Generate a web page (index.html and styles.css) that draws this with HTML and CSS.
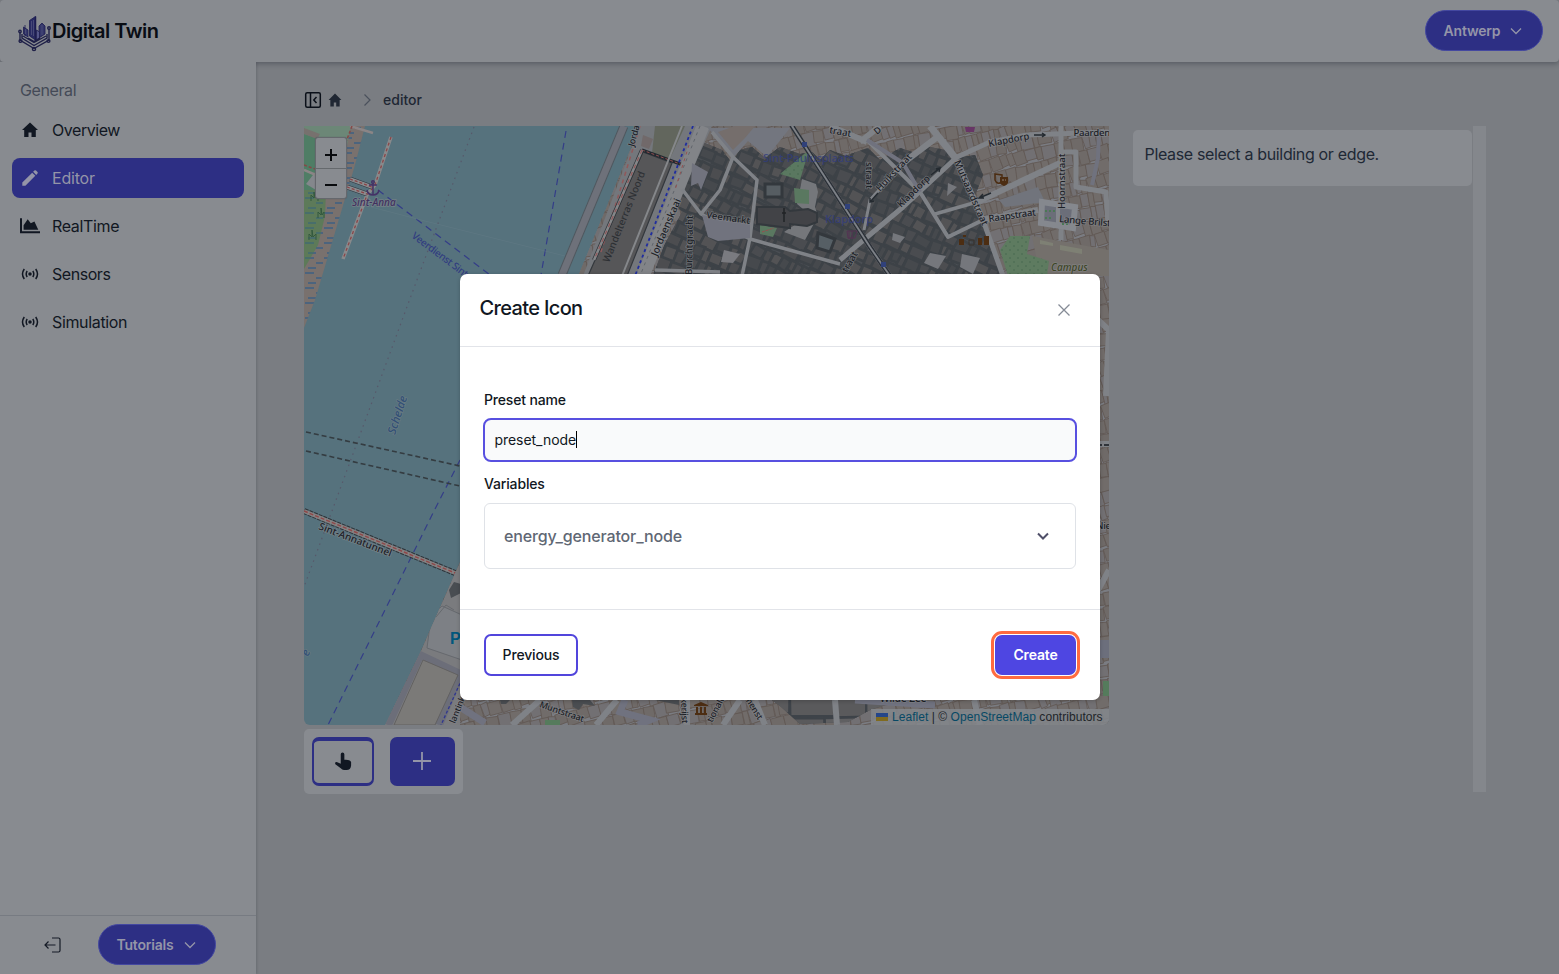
FILE: index.html
```html
<!DOCTYPE html>
<html lang="en">
<head>
<meta charset="utf-8">
<title>Digital Twin</title>
<link rel="stylesheet" href="styles.css">
</head>
<body>
<div class="app">
  <header class="navbar">
    <div class="brand">
      <svg class="logo" viewBox="0 0 34 38">
        <g fill="#1d1d50" stroke="#1d1d50" stroke-width=".8">
          <path d="M11.500 6.500 17.500 2.500V26L11.500 22Z" fill="#282a63"/>
          <path d="M17.500 2.500V27" stroke-width="1.500"/>
          <path d="M5.500 13 10 16V23L5.500 20ZM7 11V22" fill="#34366a"/>
          <path d="M21 12 24 9 27 12V20L21 24Z" fill="#34366a"/>
          <path d="M18.500 16 21.500 18V24L18.500 26Z" fill="#55578a"/>
        </g>
        <path d="M13.500 7V21M15.500 6V22M24 11V21M7.500 15V20" stroke="#55577f" stroke-width=".7"/>
        <g fill="none" stroke="#1f2048" stroke-width="1.400">
          <path d="M2 18V26L16 34.500 31 26V15M4 20V24L16 31.500 29 24V20M5 22 16 28.500 28 22M10 24 16 27.500 22 24"/>
          <circle cx="2" cy="17.500" r="1.200"/><circle cx="31" cy="14" r="1.300"/><circle cx="2.500" cy="27" r="1.400"/><circle cx="30.500" cy="27" r="1.400"/><circle cx="16" cy="35" r="1.600"/>
        </g>
      </svg>
      <span class="brand-name">Digital Twin</span>
    </div>
    <button class="pill">Antwerp <svg viewBox="0 0 12 12"><path d="M1 3.500 6 8.500 11 3.500"/></svg></button>
  </header>
  <div class="layout">
    <aside class="sidebar">
      <p class="group">General</p>
      <nav class="nav">
        <a class="nav-item"><svg viewBox="0 0 20 20" fill="currentColor"><path d="M10 2.500 2 10h2.200v7H8.500v-4.500h3V17h4.300v-7H18z"/></svg>Overview</a>
        <a class="nav-item active"><svg viewBox="0 0 20 20" fill="currentColor"><path d="M2.300 17.700v-3.100L12.200 4.700l3.100 3.100-9.900 9.900zM13.100 3.800l1.300-1.300q.8-.7 1.600 0l1.500 1.500q.7.800 0 1.600l-1.300 1.300z"/></svg>Editor</a>
        <a class="nav-item"><svg viewBox="0 0 20 20" fill="currentColor"><path d="M0 2.300h2v13h18v2H0zM3.600 13.700V9.300L7.700 3.300l3.100 4 3.600-1.700 3.900 8.100z"/></svg>RealTime</a>
        <a class="nav-item"><svg viewBox="0 0 20 20" class="line"><circle cx="10" cy="10" r="1" fill="currentColor"/><path d="M7.200 7q-2 3 0 6M12.800 7q2 3 0 6M4.300 5q-3.600 5 0 10M15.700 5q3.600 5 0 10"/></svg>Sensors</a>
        <a class="nav-item"><svg viewBox="0 0 20 20" class="line"><circle cx="10" cy="10" r="1" fill="currentColor"/><path d="M7.200 7q-2 3 0 6M12.800 7q2 3 0 6M4.300 5q-3.600 5 0 10M15.700 5q3.600 5 0 10"/></svg>Simulation</a>
      </nav>
      <div class="sidebar-footer">
        <svg class="logout" viewBox="0 0 18 18"><path d="M8 2h6.500q1.500 0 1.500 1.500v11q0 1.500-1.500 1.500H8M11.500 9H1M4.500 5.500 1 9l3.500 3.500"/></svg>
        <button class="pill">Tutorials <svg viewBox="0 0 12 12"><path d="M1 3.500 6 8.500 11 3.500"/></svg></button>
      </div>
    </aside>
    <main class="content">
      <div class="crumbs">
        <svg class="panel-icon" viewBox="0 0 18 18"><rect x="1.700" y="1.700" width="14.600" height="14.600" rx="1.500"/><path d="M6.500 2v14M12.500 6 9.800 9l2.700 3"/></svg>
        <svg class="crumb-home" viewBox="0 0 20 20"><path d="M10 2 2 10h2.200v8H8.500v-5h3v5h4.300v-8H18z"/></svg>
        <svg class="crumb-sep" viewBox="0 0 12 12"><path d="M3.500.5 9 6l-5.500 5.500"/></svg>
        <span>editor</span>
      </div>
      <div class="workspace">
        <div class="map-column">
          <div class="map">
            <svg class="tiles" viewBox="304 126 805 599">
              <defs>
                <pattern id="marsh" width="19" height="15" patternUnits="userSpaceOnUse"><path d="M1 3h9M12 8h7M4 13h8" stroke="#1f588e" stroke-width="1.200"/></pattern>
                <pattern id="dots" width="8" height="8" patternUnits="userSpaceOnUse"><circle cx="2" cy="2" r=".7" fill="#40604a"/><circle cx="6" cy="6" r=".7" fill="#40604a"/></pattern>
                <clipPath id="city"><path d="M640 126H1109V725H385L420 653 460 562Z"/></clipPath>
                <clipPath id="dense"><path d="M702 142 722 150 731 162 740 150 752 147 765 158 780 147 800 154 812 152 820 160 830 150 845 156 868 148 880 160 900 148 915 153 925 146 945 150 957 158 975 155 983 175 974 198 985 225 1003 276H653L664 246 682 212 664 190 678 172Z"/><path d="M765 695H900V700L870 710 848 722 800 724 780 706Z"/></clipPath>
              </defs>
              <rect x="304" y="126" width="805" height="599" fill="#56727d"/>
              <path d="M304 126H365L355 165 315 300 304 328Z" fill="#79716e"/>
              <path d="M304 126H365L355 165 315 300 304 328Z" fill="url(#marsh)"/>
              <path d="M304 126H351L345 155 340 195 304 198Z" fill="#6c8777"/>
              <path d="M304 134 318 138 320 195H304Z" fill="#4f7d65"/>
              <path d="M304 128 320 134 317 139 304 134Z" fill="#77716e"/>
              <path d="M306 184 316 171V190Z" fill="#84878c"/>
              <path d="M304 190H326L325 216 318 245 304 269Z" fill="#5d7a59"/>
              <path d="M304 190H326L325 216 318 245 304 269Z" fill="url(#marsh)" opacity=".7"/>
              <path d="M309 240v-6l3 3v-7l1 7 3-3v6M318 218v-6l3 3v-7l1 7 2-3v6M311 201v-6l3 3v-6l1 6 3-3v6" stroke="#32583e" fill="none"/>
              <path d="M350 126 373 133M304 170l12 5" stroke="#8b8586" stroke-width="2.500"/>
              <path d="M304 165 318 170M352 126 343 150" stroke="#864847" stroke-width="1.500" stroke-dasharray="3 2"/>
              <g fill="none">
                <path d="M391 137 375 185 367 195 343 259" stroke="#88898b" stroke-width="3.500"/>
                <path d="M391 137 375 185 367 195 343 259" stroke="#8b4548" stroke-width="1.300" stroke-dasharray="3 3"/>
                <path d="M350 179 372 187M347 187 367 194" stroke="#303740" stroke-width="5"/>
                <path d="M350 179 372 187M347 187 367 194" stroke="#8a8b8e" stroke-width="3.500"/>
                <path d="M350 179 372 187M347 187 367 194" stroke="#8b4548" stroke-width="1.300" stroke-dasharray="3 2"/>
                <path d="M474 127 408 304 332 511 304 587" stroke="#57586a" stroke-width="1.200" stroke-dasharray="1.500 4.500"/>
                <path d="M378 190 490 275M566 131 541 275M460 460 433 513 328 725" stroke="#343d88" stroke-width="1.200" stroke-dasharray="7 5"/>
                <path d="M371 207 425 221 565 256" stroke="#617a84" stroke-width=".6"/>
                <path d="M306 432 460 466M306 451 460 486" stroke="#343c41" stroke-width="1.600" stroke-dasharray="5 3"/>
                <path d="M304 511 460 575" stroke="#2e343a" stroke-width="6" stroke-dasharray="4 1"/>
                <path d="M304 511 460 575" stroke="#848283" stroke-width="4"/>
                <path d="M304 511 460 575" stroke="#8f4849" stroke-width="1.400" stroke-dasharray="4 2"/>
              </g>
              <g clip-path="url(#city)">
                <path d="M640 126H1109V725H385L420 653 460 562Z" fill="#7a7c82"/>
                <g id="parcels"></g>
                <g clip-path="url(#dense)"><rect x="640" y="126" width="400" height="599" fill="#4a4e53"/><g id="buildings"></g></g>
                <path d="M640 126H712L645 276H583Z" fill="#74777c"/>
                <path d="M655 126H685L668 163 652 153Z" fill="#62665d"/>
                <path d="M643 135 653 139 649 149 641 146Z" fill="#71696a"/>
                <path d="M643 152 672 163 627 276H588Z" fill="#565658" stroke="#34383d" stroke-width="1.200"/>
                <path d="M642 150 683 165" stroke="#222930" stroke-width="3"/>
                <path d="M642 150 683 165" stroke="#945050" stroke-dasharray="3 2"/>
                <path d="M640 126 600 255" stroke="#91585a" stroke-width="1.500" stroke-dasharray="4 4"/>
                <path d="M642 150 594 260" stroke="#303439" stroke-width="4"/><path d="M642 150 594 260" stroke="#858789" stroke-width="2.500"/>
                <path d="M642 150 594 260" stroke="#91585a" stroke-width="1.200" stroke-dasharray="4 4"/>
                <path d="M703 126 643 276" stroke="#828488" stroke-width="13"/>
                <path d="M700 126 640 276" stroke="#60656b" stroke-dasharray="3 4"/>
                <path d="M682 126 622 276" stroke="#85878a" stroke-width="2"/>
                <path d="M693 126 635 276" stroke="#1f2ca0" stroke-width="1.800" stroke-dasharray="3 3"/>
                <path d="M689 145 675 190" stroke="#945050" stroke-dasharray="3 4"/>
                <path d="M708 128H790L767 157 748 141 733 158Z" fill="#73767f"/>
                <path d="M735 126H755L745 138 733 150 718 132Z" fill="#756e6c"/>
                <g fill="none" stroke="#7f8287" stroke-linejoin="round">
                  <path d="M712 132 733 157 757 180 750 238 742 276M733 157 720 190 701 214 682 189M701 214 750 239 840 264M655 270 720 272" stroke-width="3.500"/>
                  <path d="M840 260 860 243 903 207 957 157 990 142 1027 135 1109 132" stroke-width="5"/>
                  <path d="M930 126 957 160" stroke-width="7"/><path d="M957 160 983 220 1003 276" stroke-width="5"/>
                  <path d="M880 126 860 142M830 126 867 142M940 135 903 163" stroke-width="6"/><path d="M903 163 870 200 864 230" stroke-width="3"/>
                  <path d="M867 140 920 192 948 237 983 220" stroke-width="4"/><path d="M983 220 1038 210M977 202 1060 163" stroke-width="6"/><path d="M935 214 977 202" stroke-width="3.500"/>
                  <path d="M1061 126V240M1061 152H1076V187L1106 192 1108 225" stroke-width="5"/>
                </g>
                <path d="M867 140 903 163 920 192M1099 130 1098 158 1092 185" fill="none" stroke="#70727e" stroke-width="4"/>
                <path d="M702 215 750 224 750 238 718 241 708 237Z" fill="#71737e"/>
                <path d="M692 163 708 172 701 190 698 183 691 186Z" fill="#71737e"/>
                <path d="M724 250 740 254 733 263 721 262Z" fill="#7a7b80"/>
                <path d="M809 150 800 180 780 174Z" fill="#5a7860"/><path d="M809 150 800 180 780 174Z" fill="url(#dots)"/><path d="M802 179 816 184 818 192 815 207 818 216 805 240 784 232 810 215 797 204Z" fill="#75777b"/>
                <path d="M794 188 809 190 809 204 795 203Z" fill="#5a7860"/>
                <path d="M760 225 777 228 773 237 760 234Z" fill="#5a7860"/><path d="M762 232 774 228" stroke="#945050" stroke-dasharray="3 1"/>
                <g fill="#424347" stroke="#33383d" stroke-width="2">
                  <path d="M757 207 H785 L790 211 808 209 817 213 V222 L807 226 790 224 V228 L757 224Z"/><path d="M765 184H782V197H765Z" fill="#565d62" stroke-width="3"/><path d="M818 233 835 239 830 252 817 248Z" fill="#565f65" stroke-width="3"/>
                </g>
                <path d="M784 208v14M782 213h4" stroke="#202326" stroke-width="1.500"/>
                <path d="M792 126 870 247 890 276" fill="none" stroke="#7d8187" stroke-width="5"/>
                <path d="M790 126 868 247 888 276M794 126 872 247 892 276" fill="none" stroke="#2c3138" stroke-width="1.400"/>
                <path d="M802 142h5v5h-5zM845 204h5v5h-5zM881 262h5v5h-5z" fill="#30417a"/>
                <path d="M999 200 1038 187 1045 202 1005 207Z" fill="#71747c"/>
                <path d="M948 183 957 187 947 196M930 253 946 256 938 269 924 263ZM962 254 980 258 973 274 960 267ZM893 233 905 237 900 243 892 240Z" fill="#75777c"/>
                <path d="M1042 202 1075 207 1073 228 1041 223Z" fill="#6b6e79" stroke="#85888e" stroke-width="6"/>
                <path d="M1058 204V226" stroke="#85888e" stroke-width="4"/>
                <path d="M1045 211h10M1045 218h8M1062 224h8" stroke="#4a7955" stroke-width="2" stroke-dasharray="2 2"/>
                <path d="M1032 236 1109 250V276H1040Z" fill="#74706c"/><path d="M1040 240 1053 243V246L1040 244ZM1060 245 1082 249V254L1060 250Z" fill="#7e8074"/>
                <path d="M1010 236H1030L1027 254 1049 261 1047 276H1008L1000 250Z" fill="#5e7b60"/><path d="M1010 236H1030L1027 254 1049 261 1047 276H1008L1000 250Z" fill="url(#dots)"/>
                <g fill="none" stroke="#7f8287" stroke-width="6"><path d="M1098 320 1109 330 1106 396M1098 444H1110M1098 590 1109 570M512 725 540 700M596 725 617 700M687 700V725M723 725 740 700M755 700 765 725M835 700 837 725M974 700 980 725"/></g>
                <path d="M1097 445h13" stroke="#30343a" stroke-width="2" stroke-dasharray="5 2"/>
                <path d="M1097 640h12v18h-12z" fill="#6c6f7c"/><path d="M1103 681h7v15h-7zM545 720h15v6h-15z" fill="#557b5c"/>
                <path d="M460 707 485 723M625 700 620 712 650 720 638 725M855 700 935 705" fill="none" stroke="#70727f" stroke-width="7"/>
                <path d="M500 700h10l-4 4h-5zM572 700h18l5 6-12-2-4 6-6-3zM655 700h24v5z" fill="#4a4d51"/>
                <path d="M385 725 420 653 460 562V725Z" fill="#7a7b7e"/>
                <path d="M431 617 442 606 462 615V660L427 648Z" fill="#7d8085" stroke="#66696e"/><path d="M436 617 446 605 454 610" fill="none" stroke="#66696e"/>
                <path d="M388 725 420 655 460 674 439 725" fill="none" stroke="#6c6e79" stroke-width="8"/>
                <path d="M394 725 423 660 458 675 435 725Z" fill="#7b7a78" stroke="#626161"/>
                <path d="M449 590 454 582 461 584V593L451 598Z" fill="#494d52"/>
                <path d="M462 679 441 725" stroke="#30368f" stroke-width="1.300" stroke-dasharray="3 2"/>
              </g>
              <path d="M624 126 562 275" stroke="#50585f" stroke-width="9"/><path d="M624 126 562 275" stroke="#6e717a" stroke-width="7"/>
              <g fill="none" stroke="#443266" stroke-width="1.500"><path d="M373 183v12M369 185h8M367 190q1 5 6 5t6-5"/><circle cx="373" cy="182" r="1.300"/></g>
              <g class="labels">
                <text x="352" y="206" class="violet">Sint-Anna</text>
                <text transform="translate(411 237) rotate(37)" class="blue narrow">Veerdienst Sint</text>
                <text transform="translate(395 435) rotate(-72)" class="river">Schelde</text>
                <text transform="translate(308 657) rotate(-65)" class="river">e</text>
                <text transform="translate(318 529) rotate(21)">Sint-Annatunnel</text>
                <text transform="translate(609 263) rotate(-68)" class="muted">Wandelterras Noord</text>
                <text transform="translate(634 147) rotate(-75)" class="tiny">Jorda</text>
                <text transform="translate(657 257) rotate(-67)">Jordaenskaai</text>
                <text transform="translate(692 275) rotate(-89)" class="small">Burchtgracht</text>
                <text transform="translate(706 218) rotate(8)" class="small">Veemarkt</text>
                <text x="763" y="162" class="blue faint">Sint-Paulusplaats</text>
                <text x="825" y="223" class="blue faint">Klapdorp</text>
                <text transform="translate(829 133) rotate(10)" class="small">traat</text><text transform="translate(847 273) rotate(-60)" class="small">traat</text>
                <text transform="translate(877 135) rotate(-40)" class="tiny">D</text>
                <text transform="translate(866 162) rotate(90)" class="small">straat</text>
                <text transform="translate(880 192) rotate(-47)" class="small">Huikstraat</text>
                <text transform="translate(901 208) rotate(-44)" class="small">Klapdorp</text>
                <text transform="translate(954 162) rotate(66)" class="small">Mutsaardstraat</text>
                <text transform="translate(989 147) rotate(-11)" class="small">Klapdorp</text>
                <text x="1073.500" y="136" class="tight">Paarden</text>
                <text transform="translate(1065 209) rotate(-90)" class="small">Hoornstraat</text>
                <text transform="translate(989 222) rotate(-8)" class="tight">Raapstraat</text>
                <text transform="translate(1059 222) rotate(5)" class="tight">Lange Brilst</text>
                <text x="1051" y="271" class="campus">Campus</text>
                <text x="1096" y="529" class="tight">Nie</text>
                <text transform="translate(455 724) rotate(-68)" class="tiny">lantink</text>
                <text transform="translate(539 707) rotate(19)" class="tiny">Muntstraat</text>
                <text transform="translate(681 698) rotate(88)" class="tiny">kerijst</text><text transform="translate(712 723) rotate(-62)" class="tiny">tionale</text><text transform="translate(744 698) rotate(58)" class="tiny">menst</text>
                <text x="880" y="702">Wilde Zee</text>
              </g>
              <text x="450" y="644" class="parking">P</text>
              <path d="M1034 135h11m-3-2 3 2-3 2M991 193l-12 5m4-4-4 4 5 0M931 175l9-7m-4 1 4-1-1 4M878 193l-8 9m0-4 0 4 4-1" fill="none" stroke="#242a30" stroke-width="1.400"/>
              <g fill="none" stroke="#4c2d12" stroke-width="1.500"><path d="M995 174l7 1v7q-5 3-7-2z"/></g>
              <g fill="#4c2d12"><path d="M1000 177h8v6q-4 6-8 0zM959 239h5v6h-5zM963 235h3v2h-3zM978 238h4v7h-4zM984 236h5v9h-5z"/><path d="M694 705l7-3 7 3v1h-14zM695 713h12v2h-12zM696 707h2v6h-2zM700 707h2v6h-2zM704 707h2v6h-2z"/></g>
              <path d="M969 240h5v5h-5z" fill="none" stroke="#3a332d"/>
              <path d="M965 127h10l-1 5h-8z" fill="#673566"/><path d="M847 231h10l-2 7h-7zM849 231v8M852 231v8" fill="none" stroke="#543353"/><path d="M1002 180h2m1 0h1" stroke="#8c8178"/>
            </svg>
            <div class="zoom"><span><svg viewBox="0 0 12 12"><path d="M0 6h12M6 0v12"/></svg></span><span><svg viewBox="0 0 12 12"><path d="M0 6h12"/></svg></span></div>
            <div class="attribution"><i class="flag"></i><a>Leaflet</a> | © <a>OpenStreetMap</a> contributors</div>
          </div>
          <div class="toolbar">
            <button class="tool outlined"><svg viewBox="0 0 20 22"><path d="M7.500 3q0-2 2-2t2 2v6q6-.5 7.500 2.500v4q-.5 5-5 5H11q-2 0-3.500-2L1.500 14q-1-2.500 1.500-2.500l4.500 2z"/></svg></button>
            <button class="tool filled"><svg viewBox="0 0 18 18"><path d="M9 0v18M0 9h18"/></svg></button>
          </div>
        </div>
        <div class="detail"><div class="notice">Please select a building or edge.</div></div>
        <div class="scroll-rail"></div>
      </div>
    </main>
  </div>
  <section class="modal">
    <div class="modal-head"><h2>Create Icon</h2><svg viewBox="0 0 12 12"><path d="M.5.500l11 11M11.500.500l-11 11"/></svg></div>
    <div class="modal-body">
      <label>Preset name</label>
      <div class="input">preset_node<i class="caret"></i></div>
      <label>Variables</label>
      <div class="accordion">energy_generator_node<svg viewBox="0 0 12 12"><path d="M1 3.500 6 8.500 11 3.500"/></svg></div>
    </div>
    <div class="modal-foot"><button class="previous">Previous</button><button class="create">Create</button></div>
  </section>
</div>
<script src="map.js"></script>
</body>
</html>
```
FILE: styles.css
```css
* { box-sizing: border-box; }
body { margin: 0; font-family: Inter, "Liberation Sans", sans-serif; color: #111722; background: #7a7d82; }
button { font-family: inherit; }
.app { position: relative; width: 1559px; height: 974px; overflow: hidden; display: flex; flex-direction: column; }
.navbar { height: 62px; flex: none; display: flex; align-items: center; justify-content: space-between; padding: 0 16px 0 18px; background: #888b90; border-radius: 4px; box-shadow: 0 2px 5px rgba(30,35,45,.35); }
.brand { display: flex; align-items: center; }
.logo { width: 34px; height: 38px; margin-top: 4px; }
.brand-name { font-size: 20px; font-weight: 600; letter-spacing: -.5px; color: #090d14; }
.pill { display: flex; align-items: center; justify-content: center; gap: 10px; height: 41px; width: 118px; padding: 0 2px 0 0; border: 1px solid #4448a0; border-radius: 21px; background: #2d2f84; color: #9495a8; font-size: 14px; font-weight: 600; letter-spacing: -.2px; }
.navbar .pill { margin-bottom: 1px; }
.pill svg { width: 12px; height: 12px; fill: none; stroke: currentColor; stroke-width: 1.300; }
.layout { display: flex; flex: 1; }
.sidebar { position: relative; width: 256px; display: flex; flex-direction: column; background: #888b90; box-shadow: 1px 0 2px rgba(40,45,55,.2); clip-path: inset(0 -3px 0 0); }
.group { margin: 18px 0 0 20px; line-height: 20px; font-size: 16px; letter-spacing: -.4px; color: #444a57; }
.nav { display: flex; flex-direction: column; gap: 8px; margin: 10px 12px 0; }
.nav-item { display: flex; align-items: center; gap: 12px; height: 40px; padding-left: 8px; border-radius: 8px; font-size: 16px; letter-spacing: -.45px; }
.nav-item:last-child, .nav-item:nth-child(3) { letter-spacing: -.35px; }
.nav-item.active { background: #2d2f84; color: #9495a8; letter-spacing: -.2px; }
.nav-item svg { width: 20px; height: 20px; }
.nav-item .line { fill: none; stroke: currentColor; stroke-width: 1.500; }
.sidebar-footer { margin-top: auto; height: 59px; border-top: 1px solid #777b82; display: flex; align-items: center; gap: 36px; padding: 0 0 1px 44px; }
.logout { width: 18px; height: 18px; fill: none; stroke: #151b26; stroke-width: 1.200; }
.content { flex: 1; padding: 28px 0 0 48px; }
.crumbs { height: 20px; display: flex; align-items: center; font-size: 14px; font-weight: 500; color: #202733; }
.crumbs span { margin-bottom: 2px; }
.panel-icon { width: 18px; height: 18px; fill: none; stroke: #0b1019; stroke-width: 1.500; }
.crumb-home { width: 16px; height: 16px; margin-left: 5px; fill: #202733; }
.crumb-sep { width: 12px; height: 12px; margin: 0 10px 0 18px; fill: none; stroke: #4b515c; stroke-width: 1.200; }
.workspace { display: flex; margin-top: 16px; }
.map-column { width: 805px; }
.map { position: relative; width: 805px; height: 599px; border-radius: 0 0 6px 6px; overflow: hidden; }
.tiles { display: block; width: 805px; height: 599px; }
.labels text { font: 500 10px "Noto Sans", sans-serif; fill: #1c2127; stroke: #888a8e; stroke-width: 1.500px; paint-order: stroke; stroke-opacity: .6; }
.labels .small { font-size: 9.500px; }
.labels .tiny { font-size: 9px; letter-spacing: -.2px; }
.labels .tight { font-size: 9.600px; letter-spacing: -.25px; }
.labels .blue { fill: #303c80; stroke: none; font-size: 11px; }
.labels .narrow { font-size: 10px; letter-spacing: -.3px; }
.labels .faint { opacity: .75; }
.labels .violet { fill: #41315f; font-style: italic; }
.labels .river { fill: #314f76; stroke-opacity: .35; font-size: 11.500px; font-style: italic; }
.labels .muted { fill: #2d3034; stroke: none; }
.labels .campus { fill: #3d4526; font-style: italic; }
.parking { font: 700 16px "Liberation Sans", sans-serif; fill: #00577d; }
.zoom { position: absolute; left: 11px; top: 11px; width: 32px; height: 62px; border: 1px solid #65686d; border-radius: 3px; background: #888b90; box-shadow: 0 0 1px #505359; }
.zoom span { height: 30px; display: flex; align-items: center; justify-content: center; padding: 3px 0 0; }
.zoom span + span { border-top: 1px solid #65696d; padding-top: 2px; }
.zoom svg { width: 12px; height: 12px; stroke: #080a0d; stroke-width: 2; }
.attribution { position: absolute; right: 0; bottom: 0; height: 16px; width: 238px; padding: 0 5px; font: 12px/16px "Liberation Sans", Arial, sans-serif; letter-spacing: .05px; color: #202429; background: rgba(132,135,140,.85); white-space: nowrap; }
.attribution a { color: #074965; }
.flag { display: inline-block; width: 12px; height: 8px; margin-right: 4px; background: linear-gradient(#24468a 50%, #806b20 50%); }
.toolbar { display: flex; gap: 16px; width: 159px; height: 65px; margin-top: 4px; padding: 8px; border-radius: 5px; background: #888b90; }
.tool { height: 49px; padding: 0 1px 1px 0; border: 0; border-radius: 7px; display: flex; align-items: center; justify-content: center; }
.outlined { width: 62px; border: solid #2d2f84; border-width: 4px 2px 3px; background: #888b90; }
.outlined svg { width: 18px; height: 21px; fill: #111722; }
.filled { width: 65px; background: #2d2f84; }
.filled svg { width: 18px; height: 18px; stroke: #9495a8; stroke-width: 1.800; }
.detail { width: 364px; padding: 4px 0 0 24px; }
.notice { width: 339px; height: 56px; padding: 12px 12px 12px 11.500px; border-radius: 5px; background: #888b90; font-size: 16px; line-height: 24px; letter-spacing: -.34px; color: #202835; white-space: nowrap; }
.scroll-rail { width: 13px; height: 666px; background: #84878c; }
.modal { position: absolute; left: 460px; top: 274px; width: 640px; height: 426px; border-radius: 7px; background: #fff; box-shadow: 0 1px 4px rgba(0,0,0,.2); }
.modal-head { height: 73px; display: flex; justify-content: space-between; padding: 20px 30px 0 19.500px; border-bottom: 1px solid #e2e4e9; }
.modal-head h2 { margin: 0; font-size: 20px; line-height: 28px; font-weight: 500; letter-spacing: -.65px; }
.modal-head svg { width: 12px; height: 12px; margin-top: 10px; stroke: #858b96; stroke-width: 1.300; }
.modal-body { height: 263px; padding: 43px 24px 0; border-bottom: 1px solid #e2e4e9; }
.modal-body label { display: block; height: 20px; font-size: 14px; line-height: 20px; font-weight: 500; letter-spacing: -.16px; }
.input { display: flex; align-items: center; height: 44px; margin: 8px -1px 12px; padding: 0 0 2px 9.500px; border: 2px solid #5850e0; border-radius: 8px; background: #f9fafb; font-size: 14px; letter-spacing: -.05px; }
.caret { width: 1px; height: 17px; background: #000; }
.accordion { display: flex; align-items: center; justify-content: space-between; height: 66px; margin-top: 9px; padding: 0 26px 0 19px; border: 1px solid #dfe2e7; border-radius: 6px; font-size: 16px; font-weight: 500; letter-spacing: -.13px; color: #606774; }
.accordion svg { width: 12px; height: 12px; fill: none; stroke: #4f4f68; stroke-width: 2; }
.modal-foot { height: 90px; display: flex; align-items: center; justify-content: space-between; padding: 0 24px; }
.modal-foot button { padding: 0 0 2px; font-size: 14px; letter-spacing: -.15px; }
.modal-foot .previous { width: 94px; height: 42px; border: 2px solid #5145dc; border-radius: 7px; background: #fff; color: #111722; font-weight: 500; }
.modal-foot .create { width: 81px; height: 40px; margin-bottom: 1px; padding: 0; border: 0; border-radius: 7px; background: #4e46e2; color: #fff; font-weight: 600; outline: 3px solid #ff6b40; outline-offset: 1px; }
```
FILE: map.js
```js
// Deterministic subdivision of city blocks into parcels and buildings.
let seed = 17;
const rnd = () => (seed = (seed * 16807) % 2147483647) / 2147483647;

function drawGrid(id, box, angle, size, colors, stroke, width) {
  const [x0, y0, x1, y1] = box;
  let out = "";
  for (let y = y0; y < y1; y += size[1]) {
    let x = x0 - rnd() * size[0];
    while (x < x1) {
      const w = size[0] * (0.5 + rnd());
      const h = size[1] * (0.75 + rnd() * 0.3);
      const fill = colors[Math.floor(rnd() * colors.length)];
      const s = (rnd() - 0.5) * 3;
      out += `<path d="M${x} ${y}l${w} ${s} ${-s} ${h} ${-w} ${-s}z" fill="${fill}"/>`;
      x += w;
    }
  }
  document.getElementById(id).innerHTML +=
    `<g transform="rotate(${angle} 850 250)" stroke="${stroke}" stroke-width="${width}">${out}</g>`;
}

drawGrid("parcels", [300, 0, 1250, 900], -14, [9, 14], ["#716c6a", "#6f6a68", "#727073"], "#625954", 0.8);
drawGrid("buildings", [600, 50, 1150, 450], 25, [11, 13], ["#4c4d50", "#535355", "#46494d", "#4a4c50"], "#3d4247", 2.6);
drawGrid("buildings", [600, 640, 1150, 900], 0, [30, 26], ["#5a5a5c", "#606062"], "#3e4349", 2.4);
```
